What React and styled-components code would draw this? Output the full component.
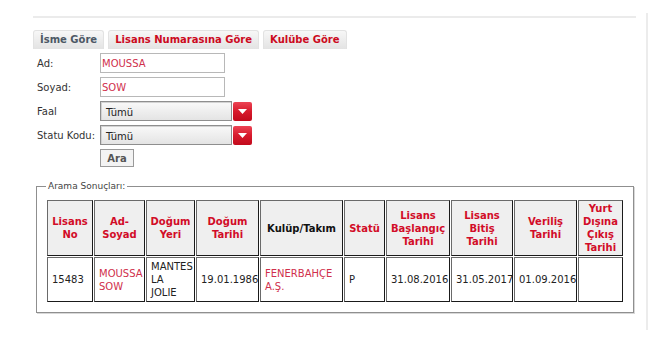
import React from "react";
import styled, { createGlobalStyle } from "styled-components";

const GlobalStyle = createGlobalStyle`
  html, body { margin: 0; padding: 0; background: #fff; }
  body {
    font-family: "DejaVu Sans", Verdana, sans-serif;
    font-size: 10px;
    color: #333;
  }
`;

const Frame = styled.div`
  box-sizing: border-box;
  width: 648px;
  height: 317px;
  margin-top: 13px;
  padding: 3px 0 0 33px;
  border-right: 2px solid #ececec;
`;

const Divider = styled.div`
  width: 603px;
  height: 2px;
  background: #ebebeb;
`;

const Tabs = styled.div`
  display: flex;
  gap: 4px;
  margin-top: 12px;
`;

const Tab = styled.div`
  box-sizing: border-box;
  height: 19px;
  padding: 0 6px;
  line-height: 18px;
  border: 1px solid #e2e2e2;
  border-bottom: none;
  border-radius: 3px 3px 0 0;
  background: linear-gradient(#f7f7f7, #e3e3e3);
  font-weight: bold;
  font-size: 10px;
  color: ${(p) => (p.$active ? "#4d5865" : "#cc0a1e")};
  white-space: nowrap;
`;

const FormGrid = styled.div`
  display: grid;
  grid-template-columns: 63px auto;
  grid-template-rows: 20px 20px 20px 20px 18px;
  row-gap: 4px;
  margin: 4px 0 0 4px;
  align-items: center;
  justify-items: start;
`;

const Label = styled.span`
  font-size: 10px;
  color: #333;
`;

const TextInput = styled.input`
  box-sizing: border-box;
  width: 125px;
  height: 20px;
  border: 1px solid #b8b8b8;
  padding: 0 1px;
  font-family: "DejaVu Sans", Verdana, sans-serif;
  font-size: 10px;
  color: #d0304c;
  background: #fff;
  outline: none;
`;

const SelectRow = styled.div`
  display: flex;
  align-items: center;
  gap: 1px;
`;

const SelectBox = styled.div`
  box-sizing: border-box;
  width: 132px;
  height: 20px;
  border: 1px solid #8e8e8e;
  box-shadow: inset 1px 1px 0 #d2d2d2;
  background: linear-gradient(#f9f9f9, #e4e4e4);
  padding: 2px 5px 0;
  display: flex;
  align-items: center;
  color: #222;
  font-size: 10px;
`;

const DropButton = styled.div`
  width: 19px;
  height: 19px;
  border-radius: 2px;
  background: linear-gradient(#ec4454 0%, #d71a2c 50%, #c20a1c 100%);
  display: flex;
  align-items: center;
  justify-content: center;
`;

const SearchButton = styled.button`
  box-sizing: border-box;
  width: 34px;
  height: 18px;
  padding: 0;
  border: 1px solid #9a9a9a;
  background: #f3f3f3;
  font-family: "DejaVu Sans", Verdana, sans-serif;
  font-weight: bold;
  font-size: 10px;
  color: #555;
`;

const Results = styled.fieldset`
  box-sizing: border-box;
  width: 598px;
  min-width: 0;
  margin: 13px 0 0 3px;
  padding: 6px 9px 9px 9px;
  border: 1px solid #8f8f8f;
  box-shadow: 1px 1px 0 #d8d8d8;
`;

const Legend = styled.legend`
  padding: 0 2px;
  font-size: 9px;
  line-height: 12px;
  color: #444;
`;

const Table = styled.table`
  border-collapse: separate;
  border-spacing: 1px;
  table-layout: fixed;
  width: 578px;
  margin-top: 1px;
`;

const Col = styled.col`
  width: ${(p) => p.$w}px;
`;

const Th = styled.th`
  border: 1px solid #333;
  border-color: #6a6a6a #1a1a1a #1a1a1a #6a6a6a;
  background: #efefef;
  padding: 1px 3px;
  font-weight: bold;
  font-size: 10px;
  line-height: 13px;
  text-align: center;
  vertical-align: middle;
  color: ${(p) => (p.$dark ? "#111" : "#d20c28")};
`;

const Td = styled.td`
  border: 1px solid #333;
  border-color: #6a6a6a #1a1a1a #1a1a1a #6a6a6a;
  background: #fff;
  padding: 2px 0 2px 4px;
  font-size: 10px;
  line-height: 13px;
  text-align: left;
  vertical-align: middle;
  white-space: normal;
  color: ${(p) => (p.$red ? "#d0304c" : "#222")};
`;

const columns = [
  { label: "Lisans No", w: 46 },
  { label: "Ad-Soyad", w: 51 },
  { label: "Doğum Yeri", w: 49 },
  { label: "Doğum Tarihi", w: 63 },
  { label: "Kulüp/Takım", w: 83, dark: true },
  { label: "Statü", w: 41 },
  { label: "Lisans Başlangıç Tarihi", w: 64 },
  { label: "Lisans Bitiş Tarihi", w: 62 },
  { label: "Veriliş Tarihi", w: 63 },
  { label: "Yurt Dışına Çıkış Tarihi", w: 45 },
];

const row = [
  { v: ["15483"] },
  { v: ["MOUSSA SOW"], red: true },
  { v: ["MANTES", "LA", "JOLIE"] },
  { v: ["19.01.1986"] },
  { v: ["FENERBAHÇE A.Ş."], red: true },
  { v: ["P"] },
  { v: ["31.08.2016"] },
  { v: ["31.05.2017"] },
  { v: ["01.09.2016"] },
  { v: [""] },
];

function Caret() {
  return (
    <svg width="9" height="5" viewBox="0 0 9 5">
      <path d="M0 0 H9 L4.5 5 Z" fill="#fff" />
    </svg>
  );
}

function Select({ value }) {
  return (
    <SelectRow>
      <SelectBox>{value}</SelectBox>
      <DropButton>
        <Caret />
      </DropButton>
    </SelectRow>
  );
}

export default function App() {
  return (
    <>
      <GlobalStyle />
      <Frame>
        <Divider />
        <Tabs>
          <Tab $active>İsme Göre</Tab>
          <Tab>Lisans Numarasına Göre</Tab>
          <Tab>Kulübe Göre</Tab>
        </Tabs>
        <FormGrid>
          <Label>Ad:</Label>
          <TextInput readOnly defaultValue="MOUSSA" />
          <Label>Soyad:</Label>
          <TextInput readOnly defaultValue="SOW" />
          <Label>Faal</Label>
          <Select value="Tümü" />
          <Label>Statu Kodu:</Label>
          <Select value="Tümü" />
          <span />
          <SearchButton>Ara</SearchButton>
        </FormGrid>
        <Results>
          <Legend>Arama Sonuçları:</Legend>
          <Table>
            <colgroup>
              {columns.map((c) => (
                <Col key={c.label} $w={c.w} />
              ))}
            </colgroup>
            <thead>
              <tr>
                {columns.map((c) => (
                  <Th key={c.label} $dark={c.dark}>
                    {c.label}
                  </Th>
                ))}
              </tr>
            </thead>
            <tbody>
              <tr>
                {row.map((cell, i) => (
                  <Td key={i} $red={cell.red}>
                    {cell.v.map((line, j) => (
                      <React.Fragment key={j}>
                        {j > 0 && <br />}
                        {line}
                      </React.Fragment>
                    ))}
                  </Td>
                ))}
              </tr>
            </tbody>
          </Table>
        </Results>
      </Frame>
    </>
  );
}
